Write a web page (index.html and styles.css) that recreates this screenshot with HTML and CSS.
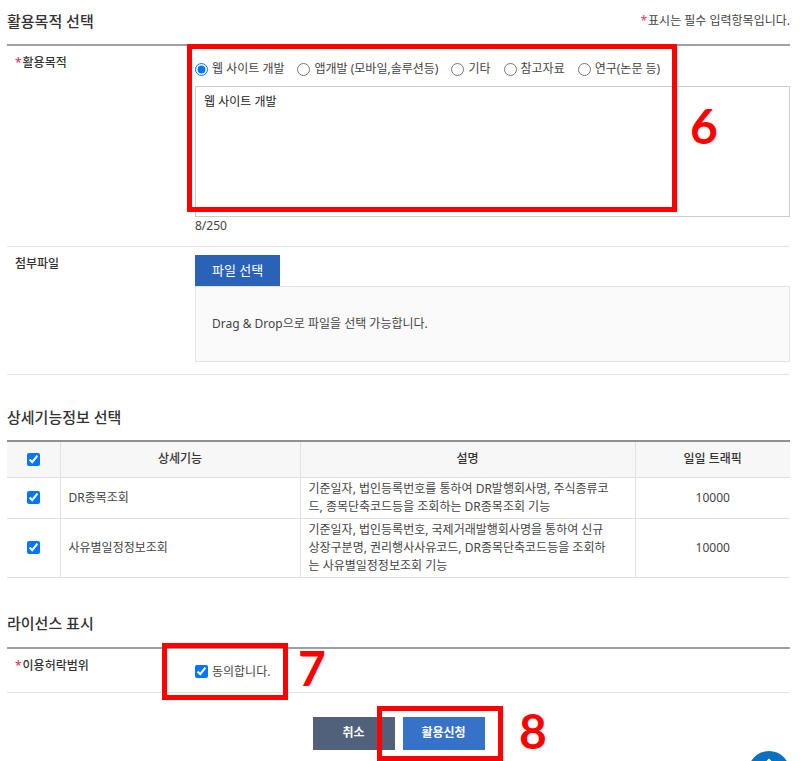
FILE: index.html
```html
<!DOCTYPE html>
<html lang="ko">
<head>
    <meta charset="UTF-8">
    <meta name="viewport" content="width=device-width, initial-scale=1.0">
    <title>활용신청</title>
    <link rel="stylesheet" href="styles.css">
</head>
<body>
    <form class="container">
        <!-- Purpose -->
        <div class="section-head">
            <h2>활용목적 선택</h2>
            <p class="notice"><span class="required">*</span>표시는 필수 입력항목입니다.</p>
        </div>
        <div class="form-table">
            <div class="form-row">
                <label class="form-label" for="purpose"><span class="required">*</span>활용목적</label>
                <div class="form-field">
                    <div class="radio-group">
                        <label><input type="radio" name="type" checked> 웹 사이트 개발</label>
                        <label><input type="radio" name="type"> 앱개발 (모바일,솔루션등)</label>
                        <label><input type="radio" name="type"> 기타</label>
                        <label><input type="radio" name="type"> 참고자료</label>
                        <label><input type="radio" name="type"> 연구(논문 등)</label>
                    </div>
                    <textarea id="purpose" maxlength="250">웹 사이트 개발</textarea>
                    <p class="count">8/250</p>
                </div>
            </div>
            <div class="form-row file-row">
                <label class="form-label" for="file">첨부파일</label>
                <div class="form-field">
                    <button type="button" id="file" class="file-btn">파일 선택</button>
                    <div class="drop-zone">Drag &amp; Drop으로 파일을 선택 가능합니다.</div>
                </div>
            </div>
        </div>

        <!-- Functions -->
        <div class="section-head">
            <h2>상세기능정보 선택</h2>
        </div>
        <table class="func-table">
            <colgroup>
                <col class="col-check">
                <col class="col-name">
                <col class="col-desc">
                <col class="col-traffic">
            </colgroup>
            <thead>
                <tr>
                    <th><input type="checkbox" aria-label="전체 선택" checked></th>
                    <th>상세기능</th>
                    <th>설명</th>
                    <th>일일 트래픽</th>
                </tr>
            </thead>
            <tbody>
                <tr>
                    <td class="center"><input type="checkbox" id="func1" checked></td>
                    <td><label for="func1">DR종목조회</label></td>
                    <td>기준일자, 법인등록번호를 통하여 DR발행회사명, 주식종류코<br>드, 종목단축코드등을 조회하는 DR종목조회 기능</td>
                    <td class="center">10000</td>
                </tr>
                <tr>
                    <td class="center"><input type="checkbox" id="func2" checked></td>
                    <td><label for="func2">사유별일정정보조회</label></td>
                    <td>기준일자, 법인등록번호, 국제거래발행회사명을 통하여 신규<br>상장구분명, 권리행사사유코드, DR종목단축코드등을 조회하<br>는 사유별일정정보조회 기능</td>
                    <td class="center">10000</td>
                </tr>
            </tbody>
        </table>

        <!-- License -->
        <div class="section-head">
            <h2>라이선스 표시</h2>
        </div>
        <div class="form-table">
            <div class="form-row agree-row">
                <label class="form-label" for="agree"><span class="required">*</span>이용허락범위</label>
                <div class="form-field">
                    <label class="agree"><input type="checkbox" id="agree" checked> 동의합니다.</label>
                </div>
            </div>
        </div>

        <div class="buttons">
            <button type="button" class="btn cancel">취소</button>
            <button type="submit" class="btn submit">활용신청</button>
        </div>

        <!-- Step marks -->
        <div class="mark mark6"></div>
        <span class="step step6">6</span>
        <div class="mark mark7"></div>
        <span class="step step7">7</span>
        <div class="mark mark8"></div>
        <span class="step step8">8</span>
    </form>

    <a href="#" class="top-btn" aria-label="맨 위로">
        <svg viewBox="0 0 42 42" width="42" height="42">
            <circle cx="21" cy="21" r="21" fill="#0b70c0"/>
            <path d="M13 17l8-8 8 8M21 10v22" fill="none" stroke="#fff" stroke-width="2"/>
        </svg>
    </a>
</body>
</html>
```

FILE: styles.css
```css
* {
    box-sizing: border-box;
}

body {
    margin: 0;
    background-color: #fff;
    color: #444;
    font-family: 'Noto Sans', 'Noto Sans CJK KR', sans-serif;
    font-size: 12px;
    line-height: 18px;
}

h2, p {
    margin: 0;
}

input {
    width: 13px;
    height: 13px;
    margin: 0;
}

button, textarea {
    font-family: inherit;
    font-size: 12px;
    line-height: 18px;
}

.container {
    position: relative;
    padding: 0 10px 0 7px;
}

.section-head {
    display: flex;
    justify-content: space-between;
    align-items: center;
    height: 44px;
    padding-bottom: 3px;
}

h2 {
    font-size: 15px;
    line-height: 24px;
    font-weight: 500;
    color: #333;
}

.required {
    margin-right: 1px;
    color: #e0345c;
}

/* Form rows */
.form-table {
    border-top: 2px solid #a0a0a0;
}

.form-row {
    display: grid;
    grid-template-columns: 180px 1fr;
    padding: 8px 0;
    border-bottom: 1px solid #e3e3e3;
}

.form-label {
    padding-left: 8px;
    font-weight: 500;
    color: #333;
}

.form-field {
    padding-left: 8px;
}

.radio-group {
    display: flex;
    flex-wrap: wrap;
    gap: 13px;
    padding: 6px 0 8px;
}

.radio-group label, .agree {
    display: flex;
    align-items: center;
    gap: 4px;
}

textarea {
    display: block;
    width: 100%;
    height: 131px;
    padding: 6px 8px;
    border: 1px solid #ccc;
    color: #222;
    resize: none;
    outline: none;
}

.count {
    padding-bottom: 3px;
}

.file-btn {
    display: block;
    padding: 6px 17px 7px;
    border: none;
    background-color: #2a62b8;
    color: #fff;
    font-size: 13px;
}

.drop-zone {
    padding: 28px 16px;
    border: 1px solid #e3e3e3;
    background-color: #fafafa;
}

.file-row {
    margin-bottom: 21px;
    padding-bottom: 12px;
}

/* Function table */
.func-table {
    width: 100%;
    margin-bottom: 25px;
    border-collapse: collapse;
    border-top: 2px solid #909090;
    table-layout: fixed;
}

.col-check {
    width: 53px;
}

.col-name {
    width: 240px;
}

.col-traffic {
    width: 155px;
}

.func-table th, .func-table td {
    padding: 2px 8px;
    border: 1px solid #e0e0e0;
    text-align: left;
}

.func-table th:first-child, .func-table td:first-child {
    border-left: none;
}

.func-table th:last-child, .func-table td:last-child {
    border-right: none;
}

.func-table th {
    height: 36px;
    border-top: none;
    background-color: #f7f7f7;
    color: #333;
    font-weight: 500;
    text-align: center;
}

.func-table .center {
    text-align: center;
}

.func-table input {
    display: block;
    margin: 0 auto;
}

.agree {
    padding: 6px 0 3px;
}

/* Buttons */
.buttons {
    display: flex;
    justify-content: center;
    gap: 8px;
    padding: 24px 0 11px;
}

.btn {
    width: 82px;
    padding: 7px 0 8px;
    border: none;
    color: #fff;
    font-weight: 700;
}

.cancel {
    background-color: #51607b;
}

.submit {
    background-color: #3572c8;
}

/* Step marks */
.mark {
    position: absolute;
    border: 5px solid #f00;
    pointer-events: none;
}

.mark6 {
    left: 187px;
    top: 44px;
    width: 490px;
    height: 168px;
}

.mark7 {
    left: 162px;
    top: 643px;
    width: 126px;
    height: 57px;
}

.mark8 {
    left: 377px;
    top: 706px;
    width: 126px;
    height: 55px;
}

.step {
    position: absolute;
    color: #f00;
    font-family: Lato, sans-serif;
    font-size: 48px;
    font-weight: 700;
    line-height: 48px;
}

.step6 {
    left: 690px;
    top: 102px;
}

.step7 {
    left: 298px;
    top: 644px;
}

.step8 {
    left: 519px;
    top: 707px;
}

.top-btn {
    position: fixed;
    right: 10px;
    bottom: -32px;
    height: 42px;
}
```
